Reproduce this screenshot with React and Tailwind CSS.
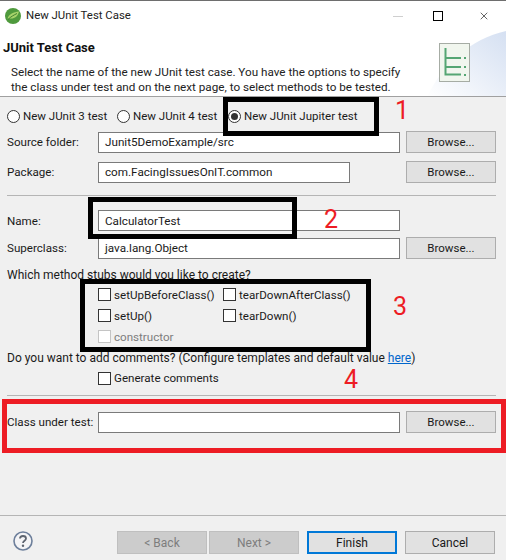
import { X } from 'lucide-react';

function Radio({ checked }) {
  return (
    <span className="flex h-[13px] w-[13px] shrink-0 items-center justify-center rounded-full border border-[#333333] bg-white">
      {checked && <span className="h-[7px] w-[7px] rounded-full bg-[#333333]" />}
    </span>
  );
}

function Check({ label, disabled, className = '' }) {
  return (
    <div className={`flex items-center gap-[3px] ${className}`}>
      <span className={`h-[13px] w-[13px] shrink-0 border bg-white ${disabled ? 'border-[#c4c4c4]' : 'border-[#333333]'}`} />
      <span className={`pt-[2px] text-[11.6px] ${disabled ? 'text-[#7d7d7d]' : ''}`}>{label}</span>
    </div>
  );
}

function Field({ value, className = 'flex-1' }) {
  return (
    <div className={`flex h-[21px] items-center border border-[#7a7a7a] bg-white pl-[6px] pt-[2px] text-[11.7px] ${className}`}>
      {value}
    </div>
  );
}

function Browse() {
  return (
    <button className="ml-auto h-[22px] w-[90px] shrink-0 border border-[#adadad] bg-[#e1e1e1] pt-[2px] text-center text-[11.5px]">
      Browse...
    </button>
  );
}

function Row({ label, value, browse = true, fieldClass = 'w-[302px]', className = '' }) {
  return (
    <div className={`flex h-[22px] items-center ${className}`}>
      <span className="w-[91px] shrink-0 whitespace-nowrap pt-[2px] text-[11.6px]">{label}</span>
      <Field value={value} className={fieldClass} />
      {browse && <Browse />}
    </div>
  );
}

function FooterButton({ children, disabled, primary, className = '' }) {
  return (
    <button
      className={`h-[23px] w-[90px] pt-px text-center ${
        disabled
          ? 'border border-[#bfbfbf] bg-[#cccccc] text-[#7d7d7d]'
          : primary
          ? 'border-2 border-[#0078d7] bg-[#e1e1e1]'
          : 'border border-[#adadad] bg-[#e1e1e1]'
      } ${className}`}
    >
      {children}
    </button>
  );
}

export default function App() {
  return (
    <div className="relative flex h-[560px] w-[506px] flex-col overflow-hidden bg-[#f0f0f0] font-['Roboto',sans-serif] text-[12px] text-[#1a1a1a]">

      {/* Title bar */}
      <div className="flex h-[31px] shrink-0 items-center border-t border-[#6e6e6e] bg-white pl-[5px]">
        <svg width="16" height="16" viewBox="0 0 16 16">
          <circle cx="8" cy="8" r="8" fill="#4f9a3d" />
          <path d="M2.5 10.5C4 6 8.5 4 14 3.5 13 8 10 10.5 6 10.5 5 10.5 3.5 10.8 2.5 10.5Z" fill="#a6d36a" />
          <path d="M3 11.5C6 8.5 9 7 12 5.5" stroke="#3f7f31" strokeWidth="1" fill="none" />
        </svg>
        <span className="ml-[5px] text-[11.4px] text-[#222222]">New JUnit Test Case</span>
        <div className="ml-auto flex items-center">
          <span className="h-px w-[10px] bg-[#cfcfcf]" />
          <span className="ml-[30px] h-[10px] w-[10px] border border-black" />
          <X className="ml-[35px] mr-[16px] h-[12px] w-[12px] text-[#222222]" strokeWidth={1.4} />
        </div>
      </div>

      {/* Banner */}
      <div className="relative h-[66px] shrink-0 overflow-hidden border-b border-[#a0a0a0] bg-white">
        <svg className="absolute right-0 top-0" width="90" height="66" viewBox="0 0 90 66">
          <defs>
            <linearGradient id="swoosh" x1="0" y1="1" x2="1" y2="0">
              <stop offset="0" stopColor="#ffffff" />
              <stop offset="1" stopColor="#d5e0f2" />
            </linearGradient>
          </defs>
          <path d="M11 66C26 34 54 8 90 0V66Z" fill="url(#swoosh)" />
        </svg>
        <div className="relative pl-[3px] pt-[8px] text-[13px] font-bold leading-[18px] text-[#111111]">JUnit Test Case</div>
        <div className="relative mt-[8px] pl-[11px] text-[11.7px] leading-[15px] text-[#222222]">
          <p>Select the name of the new JUnit test case. You have the options to specify</p>
          <p>the class under test and on the next page, to select methods to be tested.</p>
        </div>
        <svg className="absolute left-[439px] top-[12px]" width="31" height="39" viewBox="0 0 31 39">
          <rect x="0.5" y="0.5" width="30" height="38" fill="#f1f6ee" stroke="#a6aca4" />
          <path d="M6.5 5V31.5H22M6.5 15H22M6.5 24H22" stroke="#55a673" strokeWidth="2" fill="none" />
          <path d="M25 15H27M25 24H27M25 32H27" stroke="#55a673" strokeWidth="2" fill="none" />
        </svg>
      </div>

      {/* Form */}
      <div className="flex flex-1 flex-col pl-[7px] pr-[10px]">
        <div className="mt-[8px] flex h-[22px] items-center whitespace-nowrap text-[11.5px]">
          <Radio />
          <span className="ml-[3px] w-[94px] pt-[2px]">New JUnit 3 test</span>
          <Radio />
          <span className="ml-[3px] w-[95px] pt-[2px]">New JUnit 4 test</span>
          <Radio checked />
          <span className="ml-[3px] pt-[2px]">New JUnit Jupiter test</span>
        </div>
        <Row className="mt-[4px]" label="Source folder:" value="Junit5DemoExample/src" />
        <Row className="mt-[8px]" label="Package:" value="com.FacingIssuesOnIT.common" fieldClass="w-[252px]" />
        <div className="mt-[12px] h-px shrink-0 bg-[#b5b5b5]" />
        <Row className="mt-[14px] !h-[21px]" label="Name:" value="CalculatorTest" browse={false} />
        <Row className="mt-[6px]" label="Superclass:" value="java.lang.Object" />
        <div className="mt-[4px] flex h-[21px] items-center pt-[2px]">Which method stubs would you like to create?</div>
        <div className="ml-[91px] grid grid-cols-[125px_1fr] auto-rows-[21px]">
          <Check label="setUpBeforeClass()" />
          <Check label="tearDownAfterClass()" />
          <Check label="setUp()" />
          <Check label="tearDown()" />
          <Check label="constructor" disabled />
        </div>
        <div className="flex h-[21px] items-center whitespace-pre">
          Do you want to add comments? (Configure templates and default value <span className="text-[#0066cc] underline">here</span>)
        </div>
        <Check className="ml-[91px] h-[20px]" label="Generate comments" />
        <div className="mt-[7px] h-px shrink-0 bg-[#b5b5b5]" />
        <Row className="mt-[15px]" label="Class under test:" value="" />
      </div>

      {/* Footer */}
      <div className="flex h-[45px] shrink-0 items-start border-t border-[#b5b5b5] pl-[13px] pr-[11px] pt-[15px]">
        <svg width="20" height="20" viewBox="0 0 20 20">
          <circle cx="10" cy="10" r="9" fill="#f4f4f6" stroke="#6d7f9b" strokeWidth="1.6" />
          <path d="M7 7.6C7 5.8 8.4 5 10 5s3 .9 3 2.5c0 2.2-3 2.2-3 4.5" stroke="#5d6470" strokeWidth="1.8" fill="none" />
          <circle cx="10" cy="14.8" r="1.2" fill="#5d6470" />
        </svg>
        <div className="ml-auto flex">
          <FooterButton disabled>&lt; Back</FooterButton>
          <FooterButton disabled className="ml-[2px]">Next &gt;</FooterButton>
          <FooterButton primary className="ml-[8px]">Finish</FooterButton>
          <FooterButton className="ml-[8px]">Cancel</FooterButton>
        </div>
      </div>

      {/* Annotations drawn over the dialog */}
      <div className="pointer-events-none absolute left-[223px] top-[97px] h-[39px] w-[156px] border-[5px] border-black" />
      <div className="pointer-events-none absolute left-[88px] top-[197px] h-[42px] w-[209px] border-[5px] border-black" />
      <div className="pointer-events-none absolute left-[80px] top-[279px] h-[73px] w-[291px] border-[5px] border-black" />
      <div className="pointer-events-none absolute left-[2px] top-[399px] h-[54px] w-[504px] border-[5px] border-[#ed1c24]" />
      <span className="absolute left-[395px] top-[96px] text-[25px] leading-[30px] text-[#ed1c24]">1</span>
      <span className="absolute left-[324px] top-[205px] text-[25px] leading-[30px] text-[#ed1c24]">2</span>
      <span className="absolute left-[393px] top-[292px] text-[25px] leading-[30px] text-[#ed1c24]">3</span>
      <span className="absolute left-[344px] top-[365px] text-[25px] leading-[30px] text-[#ed1c24]">4</span>
    </div>
  );
}
